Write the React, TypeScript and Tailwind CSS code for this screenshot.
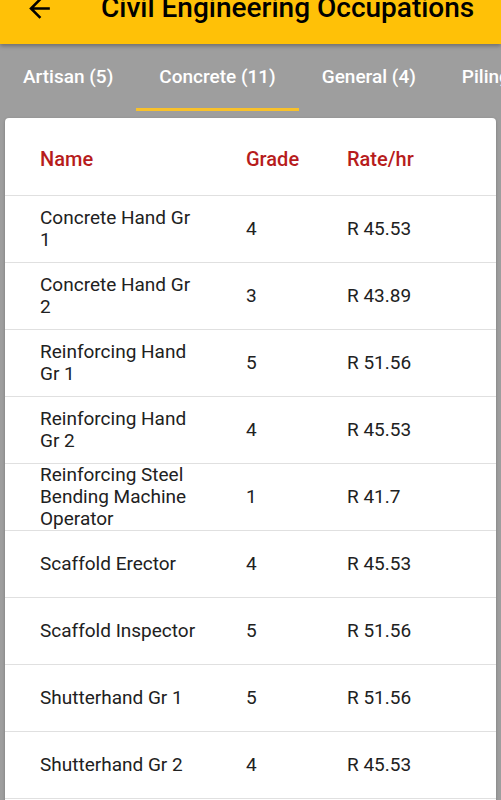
import React from "react";

const rows: [string, string, string][] = [
  ["Concrete Hand Gr 1", "4", "R 45.53"],
  ["Concrete Hand Gr 2", "3", "R 43.89"],
  ["Reinforcing Hand Gr 1", "5", "R 51.56"],
  ["Reinforcing Hand Gr 2", "4", "R 45.53"],
  ["Reinforcing Steel Bending Machine Operator", "1", "R 41.7"],
  ["Scaffold Erector", "4", "R 45.53"],
  ["Scaffold Inspector", "5", "R 51.56"],
  ["Shutterhand Gr 1", "5", "R 51.56"],
  ["Shutterhand Gr 2", "4", "R 45.53"],
  ["Shutterhand Gr 3", "3", "R 43.89"],
];

const tabs = ["Artisan (5)", "Concrete (11)", "General (4)", "Piling (3)"];

export default function App() {
  return (
    <div
      className="w-[501px] h-[800px] overflow-hidden bg-[#9e9e9e] flex flex-col"
      style={{ fontFamily: "Roboto, 'Noto Sans', sans-serif" }}
    >
      <div className="relative z-10 h-[44px] shrink-0 overflow-hidden bg-[#ffc107] shadow-[0_2px_4px_rgba(0,0,0,0.3)]">
        <div className="h-[56px] -mt-[20px] flex items-center">
          <div className="w-[78px] flex justify-center">
            <svg width="31" height="31" viewBox="0 0 24 24" className="text-black">
              <path d="M20 11H7.83l5.59-5.59L12 4l-8 8 8 8 1.41-1.41L7.83 13H20v-2z" fill="currentColor" />
            </svg>
          </div>
          <div className="pl-[23px] text-[28px] font-medium text-black whitespace-nowrap">
            Civil Engineering Occupations
          </div>
        </div>
      </div>
      <div className="h-[67px] shrink-0 flex whitespace-nowrap">
        {tabs.map((t, i) => (
          <div key={t} className="relative px-[23px] flex items-center shrink-0">
            <span className="text-[19px] font-medium text-white">{t}</span>
            {i === 1 && <div className="absolute left-0 right-0 bottom-0 h-[3px] bg-[#f8c12a]" />}
          </div>
        ))}
      </div>
      <div className="mt-[7px] mx-[5px] bg-white rounded-[4px] shadow-[0_1px_3px_rgba(0,0,0,0.25)] flex-1">
        <div className="h-[78px] pt-[4px] grid grid-cols-[206px_101px_1fr] items-center pl-[35px] border-b border-[#e0e0e0]">
          <span className="text-[20px] font-medium text-[#b71c1c]">Name</span>
          <span className="text-[20px] font-medium text-[#b71c1c]">Grade</span>
          <span className="text-[20px] font-medium text-[#b71c1c]">Rate/hr</span>
        </div>
        {rows.map(([n, g, r]) => (
          <div
            key={n}
            className="h-[67px] grid grid-cols-[206px_101px_1fr] items-center pl-[35px] border-b border-[#e0e0e0] text-[19px] leading-[22px] text-[#212121]"
          >
            <span className="w-[162px]">{n}</span>
            <span>{g}</span>
            <span>{r}</span>
          </div>
        ))}
      </div>
    </div>
  );
}
